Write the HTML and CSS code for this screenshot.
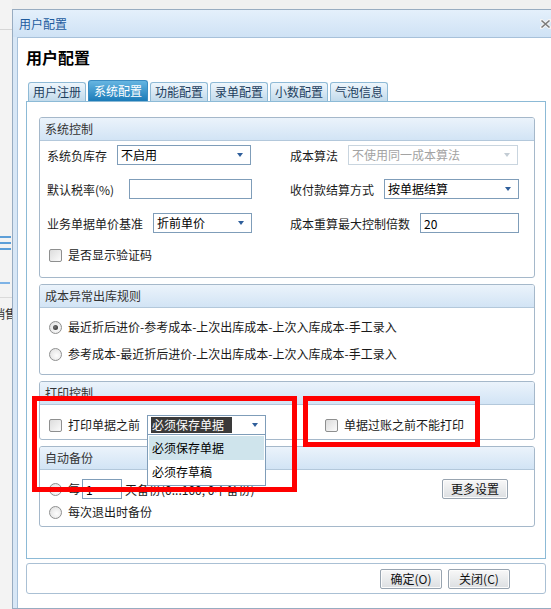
FILE: index.html
```html
<!DOCTYPE html>
<html lang="zh-CN">
<head>
  <meta charset="UTF-8">
  <title>用户配置</title>
  <link rel="stylesheet" href="styles.css">
</head>
<body>
  <div class="desk">
    <!-- sliver of the main window behind the dialog -->
    <div class="backdrop">
      <div class="bd-top"></div>
      <div class="bd-menu"><i></i><i></i><i></i></div>
      <div class="bd-bar"></div>
      <div class="bd-line"></div>
      <div class="bd-text">销售</div>
    </div>

    <div class="dialog">
      <div class="dialog-title">
        <span>用户配置</span>
        <svg class="dialog-close" width="11" height="10" viewBox="0 0 11 10">
          <path d="M1.5 1.5 L9.5 8.5 M9.5 1.5 L1.5 8.5" stroke="#f4f4f4" stroke-width="3.6" stroke-linecap="square"/>
          <path d="M1.5 1.5 L9.5 8.5 M9.5 1.5 L1.5 8.5" stroke="#7b7b7b" stroke-width="1.6"/>
        </svg>
      </div>

      <div class="dialog-body">
        <h1 class="page-title">用户配置</h1>

        <ul class="tabs">
          <li>用户注册</li>
          <li class="active">系统配置</li>
          <li>功能配置</li>
          <li>录单配置</li>
          <li>小数配置</li>
          <li>气泡信息</li>
        </ul>

        <div class="tab-panel">
          <!-- 系统控制 -->
          <section class="group group-sys">
            <div class="group-head">系统控制</div>
            <div class="group-body sys-body">
              <div class="field-row">
                <div class="field"><span class="label">系统负库存</span><div class="select w134">不启用</div></div>
                <div class="field"><span class="label">成本算法</span><div class="select disabled w170">不使用同一成本算法</div></div>
              </div>
              <div class="field-row">
                <div class="field field-wide"><span class="label">默认税率(%)</span><input class="text-input w123" type="text"></div>
                <div class="field"><span class="label">收付款结算方式</span><div class="select w135">按单据结算</div></div>
              </div>
              <div class="field-row">
                <div class="field"><span class="label">业务单据单价基准</span><div class="select w99">折前单价</div></div>
                <div class="field"><span class="label">成本重算最大控制倍数</span><input class="text-input w99" type="text" value="20"></div>
              </div>
              <label class="check"><span class="box"></span>是否显示验证码</label>
            </div>
          </section>

          <!-- 成本异常出库规则 -->
          <section class="group group-cost">
            <div class="group-head">成本异常出库规则</div>
            <div class="group-body radio-body">
              <label class="radio"><span class="dot checked"></span>最近折后进价-参考成本-上次出库成本-上次入库成本-手工录入</label>
              <label class="radio"><span class="dot"></span>参考成本-最近折后进价-上次出库成本-上次入库成本-手工录入</label>
            </div>
          </section>

          <!-- 打印控制 -->
          <section class="group group-print">
            <div class="group-head">打印控制</div>
            <div class="group-body print-row">
              <label class="check"><span class="box"></span>打印单据之前</label>
              <div class="select w119 open">
                <span class="sel-text">必须保存单据</span>
                <ul class="drop-list">
                  <li class="hover">必须保存单据</li>
                  <li>必须存草稿</li>
                </ul>
              </div>
              <label class="check post-check"><span class="box"></span>单据过账之前不能打印</label>
            </div>
          </section>

          <!-- 自动备份 -->
          <section class="group group-backup">
            <div class="group-head">自动备份</div>
            <div class="group-body backup-body">
              <div class="backup-row">
                <label class="radio"><span class="dot"></span>每</label>
                <input class="text-input w40" type="text" value="1">
                <span>天备份(0...100, 0不备份)</span>
                <button class="btn more-btn">更多设置</button>
              </div>
              <label class="radio"><span class="dot"></span>每次退出时备份</label>
            </div>
          </section>
        </div>

        <div class="footer-bar">
          <button class="btn">确定(O)</button>
          <button class="btn">关闭(C)</button>
        </div>
      </div>
    </div>

    <!-- red annotation frames drawn over the screenshot -->
    <div class="callout callout-print"></div>
    <div class="callout callout-post"></div>
  </div>
</body>
</html>
```

FILE: styles.css
```css
html, body {
  margin: 0;
  padding: 0;
  height: 100%;
  overflow: hidden;
  font-family: "Noto Sans CJK SC", "Microsoft YaHei", sans-serif;
  font-size: 12px;
  color: #1a1a1a;
  background: #f0f0f0;
}
.desk {
  position: relative;
  display: flex;
  height: 100%;
}

/* main window peeking out on the left */
.backdrop {
  width: 12px;
  flex-shrink: 0;
  overflow: hidden;
  background: #f3f3f3;
}
.bd-top {
  height: 29px;
  border-bottom: 1px solid #d6d6d6;
}
.bd-menu {
  margin-top: 206px;
  display: flex;
  flex-direction: column;
  gap: 4px;
}
.bd-menu i {
  display: block;
  width: 11px;
  height: 2px;
  background: #5d9fd8;
}
.bd-bar {
  margin-top: 32px;
  width: 10px;
  height: 2px;
  background: #7eb3e6;
}
.bd-line {
  margin-top: 13px;
  border-top: 1px solid #dadada;
}
.bd-text {
  margin: 6px 0 0 -7px;
  white-space: nowrap;
  line-height: 20px;
  color: #333;
}

/* dialog window */
.dialog {
  margin-top: 9px;
  width: 560px;
  flex-shrink: 0;
  border: 1px solid #98acc1;
  border-right: 0;
  background: #d8e7f6;
  display: flex;
  flex-direction: column;
}
.dialog-title {
  height: 27px;
  display: flex;
  align-items: center;
  justify-content: space-between;
  padding-left: 6px;
  background: linear-gradient(#e4f0fb, #cfe2f5);
  color: #1d5b9e;
}
.dialog-close {
  margin-right: 22px;
}
.dialog-body {
  flex: 1;
  margin-left: 4px;
  padding-left: 8px;
  border-top: 1px solid #a7c1da;
  border-left: 1px solid #a7c1da;
  background: #fff;
}
.page-title {
  margin: 9px 0 0;
  font-size: 16px;
  line-height: 20px;
  font-weight: bold;
  color: #000;
}

/* tabs */
.tabs {
  display: flex;
  align-items: flex-end;
  gap: 2px;
  height: 21px;
  margin: 13px 0 0;
  padding: 0 0 0 2px;
  list-style: none;
}
.tabs li {
  height: 19px;
  box-sizing: border-box;
  padding: 0 4px;
  border: 1px solid #8fbad6;
  border-bottom: 0;
  border-radius: 3px 3px 0 0;
  background: linear-gradient(#eef6fc, #c2daeb);
  color: #1c3e5e;
  line-height: 18px;
}
.tabs li.active {
  height: 21px;
  padding: 0 5px;
  border-color: #3b8cc2;
  background: linear-gradient(#66b5e1, #1b7bb8);
  color: #fff;
  line-height: 20px;
}
.tab-panel {
  width: 520px;
  height: 458px;
  box-sizing: border-box;
  border: 1px solid #8cbad6;
  padding: 15px 10px 0 12px;
  display: flex;
  flex-direction: column;
  gap: 6px;
}

/* group boxes */
.group {
  border: 1px solid #a5b8ca;
  border-radius: 3px;
}
.group-head {
  height: 22px;
  line-height: 22px;
  padding-left: 5px;
  border-bottom: 1px solid #b3c8db;
  border-radius: 2px 2px 0 0;
  background: linear-gradient(#ebf3fb, #d2e4f5);
  color: #333;
}
.group-body {
  padding-left: 7px;
}
.sys-body {
  display: flex;
  flex-direction: column;
  gap: 14px;
  padding-top: 4px;
  padding-bottom: 12px;
}
.sys-body .check {
  margin-top: -2px;
}
.field-row {
  display: grid;
  grid-template-columns: 243px 1fr;
}
.field {
  display: flex;
  align-items: center;
  gap: 10px;
  height: 20px;
}
.field-wide {
  gap: 15px;
}
.radio-body {
  display: flex;
  flex-direction: column;
  gap: 7px;
  padding-top: 9px;
  padding-bottom: 10px;
}
.print-row {
  display: flex;
  align-items: center;
  padding-top: 10px;
  padding-bottom: 4px;
}
.print-row .select {
  margin-left: 7px;
}
.post-check {
  margin-left: 57px;
}
.backup-body {
  display: flex;
  flex-direction: column;
  gap: 3px;
  padding-top: 9px;
  padding-bottom: 4px;
}
.backup-row {
  display: flex;
  align-items: center;
  height: 20px;
}
.backup-row .text-input {
  margin: 0 3px 0 2px;
}
.more-btn {
  margin-left: auto;
  margin-right: 26px;
}

/* form controls */
.check, .radio {
  display: flex;
  align-items: center;
  gap: 6px;
  height: 20px;
  line-height: 20px;
}
.box, .dot {
  width: 13px;
  height: 13px;
  box-sizing: border-box;
  margin-left: 2px;
  border: 1px solid #8e8f8f;
  flex-shrink: 0;
}
.box {
  border-radius: 2px;
  background: linear-gradient(135deg, #dcdcdc, #fbfbfb);
}
.dot {
  position: relative;
  border-radius: 50%;
  background: radial-gradient(circle at 60% 60%, #fdfdfd, #dcdcdc);
}
.dot.checked::after {
  content: "";
  position: absolute;
  left: 3px;
  top: 3px;
  width: 5px;
  height: 5px;
  border-radius: 50%;
  background: radial-gradient(circle at 40% 40%, #777, #222);
}
.select {
  position: relative;
  height: 20px;
  box-sizing: border-box;
  padding: 0 20px 0 3px;
  border: 1px solid #7f9db9;
  background: #fff;
  line-height: 18px;
  color: #000;
  white-space: nowrap;
}
.select::after {
  content: "";
  position: absolute;
  right: 7px;
  top: 7px;
  border-left: 3px solid transparent;
  border-right: 3px solid transparent;
  border-top: 4px solid #2f5f9b;
}
.select.disabled {
  border-color: #c9d5df;
  color: #a3a3a3;
}
.select.disabled::after {
  border-top-color: #c3ccd4;
}
.sel-text {
  display: inline-block;
  height: 16px;
  margin-top: 1px;
  padding: 0 8px 0 1px;
  line-height: 16px;
  background: #3a3a3a;
  color: #fff;
  vertical-align: top;
}
.drop-list {
  position: absolute;
  top: 100%;
  left: -1px;
  right: -1px;
  z-index: 5;
  margin: 0;
  padding: 1px;
  list-style: none;
  border: 1px solid #7f9db9;
  background: #fff;
}
.drop-list li {
  height: 24px;
  line-height: 24px;
  padding-left: 3px;
}
.drop-list li.hover {
  background: #cfe4ec;
}
.text-input {
  height: 20px;
  box-sizing: border-box;
  margin: 0;
  padding: 0 3px;
  border: 1px solid #7f9db9;
  font: inherit;
  color: #000;
}
.w40 { width: 40px; }
.w99 { width: 99px; }
.w119 { width: 119px; }
.w123 { width: 123px; }
.w134 { width: 134px; }
.w135 { width: 135px; }
.w170 { width: 170px; }

/* buttons */
.btn {
  height: 20px;
  padding: 0 8px;
  font: inherit;
  line-height: 18px;
  color: #111;
  border: 1px solid #98a4b0;
  border-radius: 2px;
  background: linear-gradient(#f8f8f8, #dcdfe2);
  box-shadow: inset 0 0 0 1px #fcfcfc;
}
.footer-bar {
  width: 520px;
  height: 31px;
  box-sizing: border-box;
  margin-top: 4px;
  padding-right: 35px;
  border: 1px solid #aac0d4;
  border-radius: 3px;
  display: flex;
  align-items: center;
  justify-content: flex-end;
  gap: 6px;
}
.footer-bar .btn {
  width: 62px;
}

/* red annotation frames */
.callout {
  position: absolute;
  box-sizing: border-box;
  border: 5px solid #f00;
  z-index: 10;
}
.callout-print {
  left: 32px;
  top: 396px;
  width: 265px;
  height: 96px;
}
.callout-post {
  left: 303px;
  top: 396px;
  width: 177px;
  height: 51px;
}
```
